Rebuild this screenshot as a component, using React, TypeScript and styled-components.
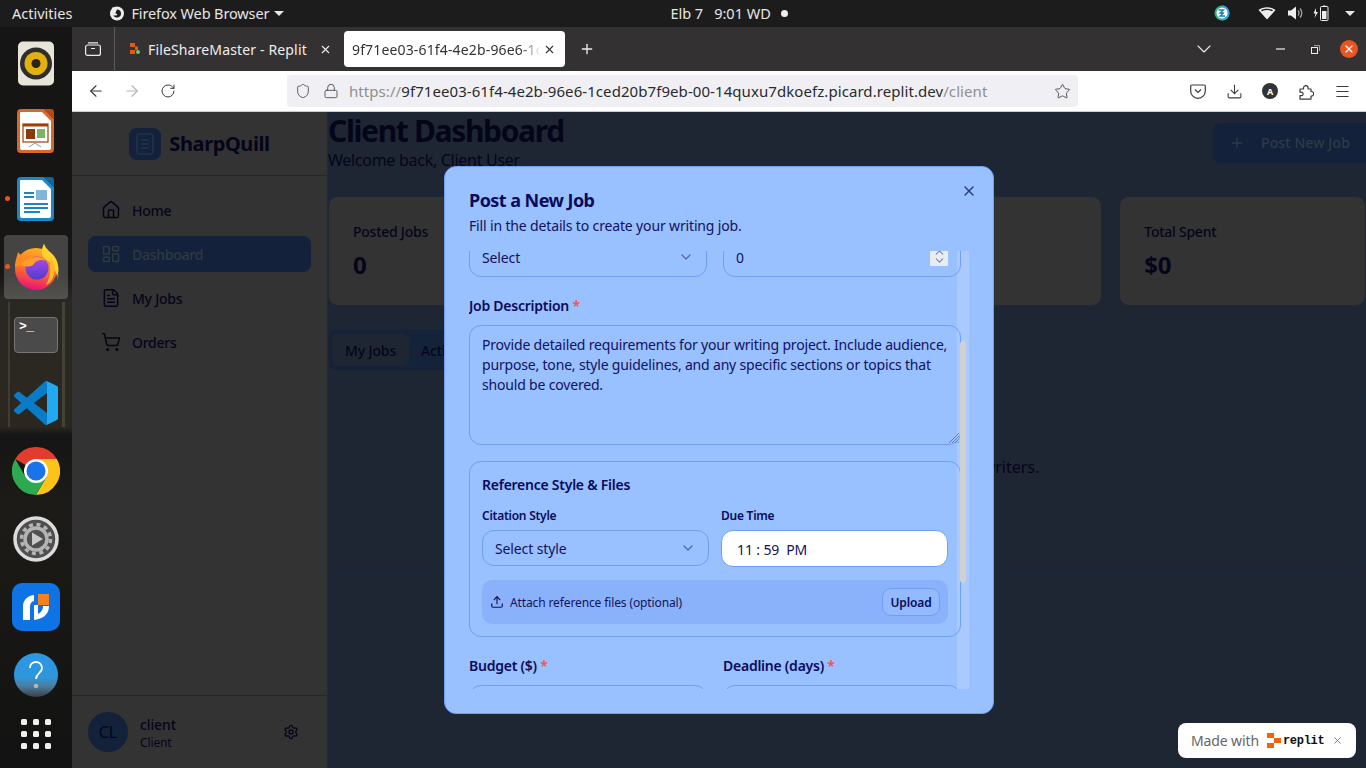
import React from 'react'
import styled, { createGlobalStyle } from 'styled-components'
import {
  ArrowLeft,
  ArrowRight,
  ChevronDown,
  ChevronUp,
  Download,
  FileText,
  Home,
  LayoutDashboard,
  Lock,
  Menu,
  Plus,
  RotateCw,
  Settings,
  Shield,
  ShoppingCart,
  Star,
  Upload,
  X,
} from 'lucide-react'

const FONT = '"Noto Sans", "Open Sans", sans-serif'
const NAVY = '#0b0b5a'
const EDGE = '#6d9ff8'
const INK = '#05051a'
const DEEP = '#13213a'

const GlobalStyle = createGlobalStyle`
  html, body { margin: 0; padding: 0; background: #1f2633; }
  * { box-sizing: border-box; }
  body { font-family: ${FONT}; overflow: hidden; }
`

/* ---------- desktop shell ---------- */
const Desktop = styled.div`
  width: 1366px;
  height: 768px;
  display: flex;
  flex-direction: column;
  overflow: hidden;
  letter-spacing: -0.12px;
`

const TopBar = styled.header`
  height: 27px;
  flex: none;
  background: #1c1c1c;
  color: #e6e6e6;
  font-size: 14.5px;
  letter-spacing: 0;
  display: flex;
  align-items: center;
  padding: 0 0 1px 12px;
`

const BarText = styled.span<{ $left?: number; $tight?: boolean }>`
  margin-left: ${(p) => p.$left ?? 0}px;
  white-space: nowrap;
  letter-spacing: ${(p) => (p.$tight ? -0.12 : 0)}px;
`

const FoxMark = styled.svg`
  margin-left: 37px;
`

const Caret = styled.i<{ $left: number }>`
  margin-left: ${(p) => p.$left}px;
  width: 0;
  height: 0;
  border-left: 5px solid transparent;
  border-right: 5px solid transparent;
  border-top: 5px solid #e6e6e6;
`

const ClockDot = styled.i`
  width: 7px;
  height: 7px;
  border-radius: 50%;
  background: #eee;
  margin-left: 10px;
`

const Tray = styled.div<{ $left: number }>`
  margin-left: ${(p) => p.$left}px;
  display: flex;
  align-items: center;
`

const Body = styled.div`
  flex: 1;
  display: flex;
  min-height: 0;
`

const Dock = styled.nav`
  width: 72px;
  flex: none;
  padding-top: 2px;
  display: flex;
  flex-direction: column;
  background:
    linear-gradient(90deg, transparent 0 8px, rgba(180, 170, 140, 0.16) 8px 10px, transparent 10px 62px, rgba(180, 170, 140, 0.2) 62px 65px, transparent 65px) 0 275px / 72px 125px no-repeat,
    linear-gradient(180deg, #151515 0, #171614 248px, #2a2823 272px, #2b2720 400px, #151515 408px, #1c1b17 480px, #121212 741px);
`

const DockSlot = styled.div<{ $active?: boolean; $height?: number }>`
  position: relative;
  height: ${(p) => p.$height ?? 68}px;
  display: flex;
  align-items: center;
  justify-content: center;

  ${(p) =>
    p.$active &&
    `
    &::before {
      content: '';
      position: absolute;
      left: 4px;
      right: 4px;
      top: 2px;
      bottom: 2px;
      border-radius: 4px;
      background: rgba(255, 255, 255, 0.2);
    }
  `}

  svg { position: relative; }
`

const RunDot = styled.i`
  position: absolute;
  left: 5px;
  top: 50%;
  margin-top: -3px;
  width: 5px;
  height: 5px;
  border-radius: 50%;
  background: #e95420;
`

const TerminalIcon = styled.div`
  width: 44px;
  height: 36px;
  border-radius: 4px;
  border: 1px solid #777;
  background: #4a4a4a;
  color: #fff;
  font: 700 13px/13px 'Liberation Mono', monospace;
  letter-spacing: -0.5px;
  padding: 2px 4px;
`

const Browser = styled.div`
  flex: 1;
  min-width: 0;
  display: flex;
  flex-direction: column;
`

const TabStrip = styled.div`
  height: 44px;
  flex: none;
  background: #333131;
  display: flex;
  align-items: center;
  color: #eee;
  font-size: 14px;
  letter-spacing: 0.15px;
`

const TabManager = styled.div`
  width: 43px;
  height: 44px;
  flex: none;
  border-right: 1px solid #5a5a5a;
  display: flex;
  align-items: center;
  justify-content: center;
`

const Tab = styled.div<{ $active?: boolean }>`
  width: 221px;
  height: 36px;
  border-radius: 4px;
  display: flex;
  align-items: center;
  flex: none;
  ${(p) =>
    p.$active
      ? `padding: 0 9px 0 8px; background: #fff; color: #333; margin-left: 8px;`
      : `padding: 0 4px 0 15px; color: #eee;`}
`

const TabTitle = styled.span<{ $fade?: boolean }>`
  flex: 1;
  min-width: 0;
  overflow: hidden;
  white-space: nowrap;
  ${(p) => p.$fade && 'mask-image: linear-gradient(90deg, #000 88%, transparent 99%);'}
`

const Favicon = styled.svg`
  margin-right: 8px;
  flex: none;
`

const StripIcons = styled.div`
  margin-left: auto;
  display: flex;
  align-items: center;
`

const StripSlot = styled.div<{ $width: number }>`
  width: ${(p) => p.$width}px;
  display: flex;
  align-items: center;
  justify-content: center;
`

const CloseDot = styled.div`
  width: 18px;
  height: 18px;
  border-radius: 50%;
  background: #e95420;
  display: flex;
  align-items: center;
  justify-content: center;
`

const NavBar = styled.div`
  height: 41px;
  flex: none;
  background: #fff;
  border-bottom: 1px solid #ccc;
  display: flex;
  align-items: center;
  padding-left: 6px;
  color: #3a3a3a;
`

const NavButton = styled.div<{ $width?: number; $muted?: boolean }>`
  width: ${(p) => p.$width ?? 36}px;
  flex: none;
  display: flex;
  align-items: center;
  justify-content: center;
  color: ${(p) => (p.$muted ? '#b5b5b5' : '#3a3a3a')};
`

const UrlBar = styled.div`
  width: 791px;
  height: 32px;
  margin: 0 102px 0 101px;
  flex: none;
  background: #f0f0f4;
  border-radius: 4px;
  display: flex;
  align-items: center;
  padding: 0 7px 0 8px;
  font-size: 15px;
`

const LockIcon = styled(Lock)`
  margin-left: 12px;
`

const UrlText = styled.div`
  margin-left: 10px;
  flex: 1;
  white-space: nowrap;
  letter-spacing: 0.07px;
  color: #2b2b2b;
  span { color: #8f8f8f; }
`

const AccountDot = styled.div`
  width: 16px;
  height: 16px;
  border-radius: 50%;
  background: #333;
  color: #fff;
  font-size: 9px;
  font-weight: 700;
  display: flex;
  align-items: center;
  justify-content: center;
`

/* ---------- the app behind the dialog ---------- */
const AppFrame = styled.div`
  position: relative;
  flex: 1;
  min-height: 0;
  display: flex;
  overflow: hidden;
`

const Sidebar = styled.aside`
  width: 256px;
  flex: none;
  background: #333;
  border-right: 1px solid #1f2a3a;
  display: flex;
  flex-direction: column;
  color: ${INK};
`

const Brand = styled.div`
  height: 64px;
  flex: none;
  border-bottom: 1px solid #1c2839;
  display: flex;
  align-items: center;
  justify-content: center;
  gap: 8px;
  font-size: 20px;
  font-weight: 700;
  letter-spacing: -0.4px;
`

const BrandMark = styled.div`
  width: 32px;
  height: 32px;
  border-radius: 8px;
  background: ${DEEP};
  color: #1e2f49;
  display: flex;
  align-items: center;
  justify-content: center;
`

const NavList = styled.ul`
  list-style: none;
  margin: 0;
  padding: 16px 16px 0;
  display: flex;
  flex-direction: column;
  gap: 8px;
  flex: 1;
`

const NavItem = styled.li<{ $active?: boolean }>`
  height: 36px;
  border-radius: 8px;
  padding: 0 13px;
  display: flex;
  align-items: center;
  gap: 11px;
  font-size: 14px;
  font-weight: 500;
  letter-spacing: -0.25px;
  background: ${(p) => (p.$active ? DEEP : 'transparent')};
  color: ${(p) => (p.$active ? '#30393f' : INK)};
`

const UserRow = styled.div`
  height: 73px;
  flex: none;
  border-top: 1px solid #1c2839;
  padding: 0 28px 0 16px;
  display: flex;
  align-items: center;
  gap: 12px;
`

const Avatar = styled.div`
  width: 40px;
  height: 40px;
  border-radius: 50%;
  background: ${DEEP};
  display: flex;
  align-items: center;
  justify-content: center;
  font-size: 16px;
`

const UserText = styled.div`
  flex: 1;
  padding-top: 4px;
  font-size: 14px;
  line-height: 18px;
  font-weight: 500;

  small {
    display: block;
    font-size: 12px;
    font-weight: 400;
  }
`

const Main = styled.main`
  flex: 1;
  min-width: 0;
  background: #1f2633;
  padding-top: 1px;
  color: ${INK};
`

const PageHead = styled.div`
  display: flex;
  align-items: center;
  justify-content: space-between;
  margin-bottom: 24px;
`

const PageTitle = styled.h1`
  margin: 0;
  font-size: 30px;
  line-height: 36px;
  font-weight: 700;
  letter-spacing: -1.35px;
`

const PageSub = styled.p`
  margin: -1px 0 0;
  font-size: 16px;
  line-height: 24px;
  letter-spacing: -0.28px;
`

const PostButton = styled.div`
  width: 153px;
  height: 40px;
  border-radius: 8px 0 0 8px;
  background: ${DEEP};
  color: #2f3a45;
  font-size: 14px;
  font-weight: 500;
  letter-spacing: 0.1px;
  display: flex;
  align-items: center;
  padding-left: 16px;
  gap: 16px;
`

const Stats = styled.section`
  display: grid;
  grid-template-columns: repeat(4, 1fr);
  gap: 17px;
`

const StatCard = styled.div`
  height: 110px;
  background: #333;
  border: 1px solid #1c2839;
  border-radius: 10px;
  padding: 25px 24px;

  p {
    margin: 0;
    font-size: 14px;
    line-height: 20px;
    font-weight: 500;
    letter-spacing: -0.25px;
  }

  strong {
    display: block;
    margin-top: 7px;
    font-size: 24px;
    line-height: 32px;
  }
`

const TabList = styled.div`
  margin: 24px 0 0 1px;
  width: 420px;
  height: 40px;
  border-radius: 8px;
  background: #14233a;
  padding: 4px 3px;
  display: flex;
  font-size: 14px;
  font-weight: 500;
`

const TabButton = styled.div<{ $active?: boolean }>`
  border-radius: 6px;
  display: flex;
  align-items: center;
  justify-content: center;
  ${(p) => p.$active && 'width: 77px; margin-right: 12px; background: #1f2633;'}
`

const EmptyPanel = styled.section`
  margin-top: 16px;
  height: 189px;
  padding-bottom: 28px;
  border: 1px solid #1a2739;
  border-radius: 10px;
  display: flex;
  align-items: center;
  justify-content: center;
  font-size: 16px;
  letter-spacing: 0;
`

/* ---------- dialog ---------- */
const Dialog = styled.div`
  position: absolute;
  left: 372px;
  top: 54px;
  width: 550px;
  height: 548px;
  background: #99c0ff;
  border: 1px solid ${EDGE};
  border-radius: 12px;
  padding: 23px 24px 24px;
  color: ${NAVY};
  display: flex;
  flex-direction: column;
`

const DialogClose = styled.div`
  position: absolute;
  right: 16px;
  top: 16px;
  color: #2c3a78;
  display: flex;
`

const DialogTitle = styled.h2`
  margin: 0;
  font-size: 18px;
  line-height: 20px;
  font-weight: 700;
  letter-spacing: -0.55px;
`

const DialogSub = styled.p`
  margin: 6px 0 0;
  font-size: 14px;
  line-height: 20px;
  letter-spacing: -0.15px;
  color: #12125c;
`

const FormClip = styled.div`
  position: relative;
  margin-top: 15px;
  height: 438px;
  overflow: hidden;
  width: 500px;
`

const Form = styled.form`
  position: relative;
  z-index: 1;
  margin-top: -14px;
  width: 492px;
  display: flex;
  flex-direction: column;
`

const Track = styled.div`
  position: absolute;
  right: 0;
  top: 0;
  bottom: 0;
  width: 12px;
  background: #a9c9ff;
`

const Thumb = styled.div`
  position: absolute;
  z-index: 2;
  right: 3px;
  top: 90px;
  width: 6px;
  height: 242px;
  border-radius: 3px;
  background: #d0d0d0;
`

const Row = styled.div<{ $gap?: number }>`
  position: relative;
  display: grid;
  grid-template-columns: 1fr 1fr;
  gap: ${(p) => p.$gap ?? 16}px;
`

const Field = styled.div`
  display: flex;
  flex-direction: column;
`

const Label = styled.label<{ $small?: boolean }>`
  display: block;
  font-size: ${(p) => (p.$small ? 12 : 14)}px;
  line-height: ${(p) => (p.$small ? 16 : 20)}px;
  font-weight: 600;
  letter-spacing: -0.25px;
  margin-bottom: ${(p) => (p.$small ? 6 : 9)}px;

  b {
    color: #ef5350;
    font-weight: 600;
  }
`

const Select = styled.div<{ $height?: number }>`
  height: ${(p) => p.$height ?? 40}px;
  border: 1px solid ${EDGE};
  border-radius: 12px;
  padding: 0 12px;
  display: flex;
  align-items: center;
  justify-content: space-between;
  font-size: 14px;
  color: #12125c;

  svg { color: #5a6c9e; }
`

const NumberInput = styled.input`
  height: 40px;
  width: 100%;
  border: 1px solid ${EDGE};
  border-radius: 12px;
  padding: 0 12px;
  background: transparent;
  font: 14px ${FONT};
  color: #12125c;
  outline: none;
`

const Spinner = styled.div`
  position: absolute;
  right: 13px;
  top: 11px;
  width: 18px;
  height: 18px;
  background: #e8ecf4;
  color: #85858f;
  display: flex;
  flex-direction: column;
  align-items: center;
  svg { margin-top: -2px; margin-bottom: -3px; }
`

const SpinWrap = styled.div`
  position: relative;
`

const AreaWrap = styled.div`
  position: relative;
`

const TextArea = styled.textarea`
  display: block;
  width: 100%;
  height: 120px;
  border: 1px solid ${EDGE};
  border-radius: 12px;
  background: transparent;
  padding: 9px 12px;
  font: 14px/20px ${FONT};
  letter-spacing: -0.18px;
  color: #12125c;
  outline: none;
  resize: none;
`

const Grip = styled.svg`
  position: absolute;
  right: 2px;
  bottom: 2px;
`

const RefPanel = styled.fieldset`
  margin: 16px 0 0;
  height: 176px;
  min-width: 0;
  border: 1px solid ${EDGE};
  border-radius: 12px;
  padding: 13px 12px 0;
`

const RefHeading = styled.h3`
  margin: 0 0 13px;
  font-size: 14px;
  line-height: 20px;
  font-weight: 600;
  letter-spacing: -0.25px;
`

const TimeBox = styled.div`
  height: 37px;
  background: #fff;
  border: 1px solid ${EDGE};
  border-radius: 12px;
  padding: 2px 15px 0;
  display: flex;
  align-items: center;
  font-size: 14px;
  color: #12125c;
  white-space: pre;
`

const AttachBar = styled.div`
  margin-top: 13px;
  height: 44px;
  border-radius: 10px;
  background: #8ab2fa;
  padding: 0 8px;
  display: flex;
  align-items: center;
  gap: 6px;
  font-size: 12px;
  color: #12125c;

  span { flex: 1; }
`

const UploadButton = styled.div`
  width: 58px;
  height: 28px;
  border: 1px solid ${EDGE};
  border-radius: 9px;
  background: #93baff;
  display: flex;
  align-items: center;
  justify-content: center;
  font-weight: 600;
  font-size: 12px;
  color: ${NAVY};
`

const BudgetRow = styled(Row)`
  margin-top: 19px;
`

const FauxInput = styled.div`
  height: 40px;
  border: 1px solid ${EDGE};
  border-radius: 12px;
`

const DescRow = styled.div`
  margin-top: 19px;
`

/* ---------- made-with badge ---------- */
const MadeWith = styled.div`
  position: absolute;
  right: 10px;
  bottom: 10px;
  width: 178px;
  height: 35px;
  border-radius: 8px;
  background: #fff;
  display: flex;
  align-items: center;
  padding: 0 13px;
  font-size: 14px;
  color: #666;
`

const MadeLogo = styled.svg`
  margin-left: 8px;
  margin-right: 2px;
`

const MadeName = styled.span`
  font: 700 12px 'Liberation Mono', monospace;
  letter-spacing: -0.3px;
  color: #111;
`

const MadeClose = styled.span`
  margin-left: auto;
  color: #777;
  display: flex;
`

/* ---------- drawn icons ---------- */
const Rhythmbox = () => (
  <svg width="44" height="45" viewBox="0 0 44 45">
    <rect width="36" height="44" x="4" y="0.5" rx="5" fill="#e8e4d8" />
    <circle cx="22" cy="22.5" r="16" fill="#2e2e2e" />
    <circle cx="22" cy="22.5" r="11.5" fill="#e2b00f" />
    <circle cx="22" cy="22.5" r="4.5" fill="#2a2518" />
  </svg>
)

const DocIcon = ({ edge, fold, children }: { edge: string; fold: string; children: React.ReactNode }) => (
  <svg width="38" height="46" viewBox="0 0 38 46">
    <path d="M4 1h23l10 10v30a4 4 0 0 1-4 4H4a4 4 0 0 1-4-4V5a4 4 0 0 1 4-4z" fill={edge} />
    <path d="M4 4h21l9 9v27a2 2 0 0 1-2 2H5a2 2 0 0 1-2-2V5a1 1 0 0 1 1-1z" fill="#fff" />
    <path d="M27 1h7a3 3 0 0 1 3 3v7z" fill={fold} />
    {children}
  </svg>
)

const FirefoxIcon = () => (
  <svg width="46" height="46" viewBox="0 0 46 46">
    <defs>
      <linearGradient id="ffBody" x1="0.6" y1="0" x2="0.4" y2="1">
        <stop offset="0" stopColor="#ffb21f" />
        <stop offset="0.55" stopColor="#ff6a2b" />
        <stop offset="1" stopColor="#e5127c" />
      </linearGradient>
      <linearGradient id="ffBall" x1="0.5" y1="0" x2="0.5" y2="1">
        <stop offset="0" stopColor="#b14be6" />
        <stop offset="1" stopColor="#4f3ccf" />
      </linearGradient>
    </defs>
    <circle cx="23" cy="25" r="21" fill="url(#ffBody)" />
    <path d="M31 0c-2 5 1 9 6 12 5 4 8 9 8 15 1 4 0 7-1 9 3-9 1-18-5-25-3-3-7-6-8-11z" fill="#ffdd3a" />
    <path d="M31 0c3 7 9 9 12 15 3 6 3 12 1 18-1-8-6-15-13-19-3-3-3-9 0-14z" fill="#ffd030" />
    <path d="M5 8c-1 5-3 9-3 15l8-3c2-3 2-7 0-9-2 0-4-1-5-3z" fill="#ff8a1f" />
    <circle cx="24" cy="24" r="11.500" fill="url(#ffBall)" />
    <path d="M7 21c4-4 9-8 17-8 4 0 7 1.500 9 4-3-1.500-6-1.500-9 0-2 1-3 3-4 4-3 2-8 2-13 0z" fill="#ff9d2b" />
    <path d="M37 13c4 5 6 11 4 17-1 5-4 9-8 11 3-6 5-12 4-18z" fill="#ffb928" />
  </svg>
)

const VsCode = () => (
  <svg width="44" height="44" viewBox="0 0 100 100">
    <path
      d="M96.5 10.8 75.9.9a6.2 6.2 0 0 0-7.1 1.2L29.3 38.2 12.1 25.1a4.2 4.2 0 0 0-5.3.2L1.4 30.3a4.2 4.2 0 0 0 0 6.2L16.3 50 1.4 63.5a4.2 4.2 0 0 0 0 6.2l5.4 4.9a4.2 4.2 0 0 0 5.3.2l17.2-13.1 39.5 36.1a6.2 6.2 0 0 0 7.1 1.2l20.6-9.9a6.2 6.2 0 0 0 3.5-5.6V16.4a6.2 6.2 0 0 0-3.5-5.6ZM75 72.7 45 50l30-22.7Z"
      fill="#0a7cc7"
    />
    <path d="M72 1.2c1.3-.7 2.7-.8 3.9-.3l20.6 9.9a6.2 6.2 0 0 1 3.5 5.6v66.8a6.2 6.2 0 0 1-3.5 5.6L75.9 99c-1.2.5-2.6.4-3.9-.3 2 .9 3 0 3-2V3.4c0-2-1-3-3-2.2Z" fill="#23a8f2" />
  </svg>
)

const ChromeIcon = () => (
  <svg width="48" height="48" viewBox="0 0 48 48">
    <path d="M3.2 12A24 24 0 0 1 44.8 12H24l-10.4 6z" fill="#e33b2e" />
    <path d="M44.8 12A24 24 0 0 1 24 48L34.4 30V18L24 12z" fill="#fcc419" />
    <path d="M24 48A24 24 0 0 1 3.2 12L13.6 30 34.4 30z" fill="#2da94f" />
    <circle cx="24" cy="24" r="12" fill="#fff" />
    <circle cx="24" cy="24" r="9.5" fill="#1a73e8" />
  </svg>
)

const SettingsIcon = () => (
  <svg width="46" height="46" viewBox="0 0 46 46">
    <circle cx="23" cy="23" r="21" fill="#4f4f4f" stroke="#dcdcdc" strokeWidth="3.5" />
    <circle cx="23" cy="23" r="11" fill="none" stroke="#b4b4b4" strokeWidth="3.5" />
    <circle cx="23" cy="23" r="14.5" fill="none" stroke="#b4b4b4" strokeWidth="3.5" strokeDasharray="4 3.6" />
    <path d="M19 16.500 30 23l-11 6.500z" fill="#c8c8c8" />
  </svg>
)

const ClientIcon = () => (
  <svg width="48" height="48" viewBox="0 0 48 48">
    <rect width="48" height="48" rx="10" fill="#0e74e6" />
    <path d="M11 37V24c0-7 4-11 11-12v6c-3 .5-4 3-4 6v13z" fill="#fff" />
    <path d="M22 37c7-1 15-4 15-14h-6c0 5-3 7-5 8v-9h-4z" fill="#fff" />
    <rect x="26" y="11" width="11" height="11" fill="#f58220" />
  </svg>
)

const HelpIcon = () => (
  <svg width="44" height="44" viewBox="0 0 44 44">
    <defs>
      <linearGradient id="helpFill" x1="0" y1="0" x2="0" y2="1">
        <stop offset="0" stopColor="#2c97e4" />
        <stop offset="0.55" stopColor="#2f96dc" />
        <stop offset="0.75" stopColor="#4b7da0" />
        <stop offset="1" stopColor="#3a3f48" />
      </linearGradient>
    </defs>
    <circle cx="22" cy="22" r="22" fill="url(#helpFill)" />
    <path d="M16 15c0-4 3-6 6-6s6 2.500 6 6c0 5-6 5.500-6 11" fill="none" stroke="#fff" strokeWidth="1.800" />
    <circle cx="22" cy="33" r="2.300" fill="#b5b5b5" />
  </svg>
)

const AppGrid = () => (
  <svg width="32" height="32" viewBox="0 0 32 32" fill="#f0f0f0">
    {[0, 12, 24].map((y) =>
      [0, 12, 24].map((x) => <rect key={`${x}-${y}`} x={x + 1} y={y + 1} width="6" height="6" rx="1.500" />),
    )}
  </svg>
)

const dockDoc = {
  impress: (
    <g>
      <rect x="6" y="16" width="25" height="18" fill="#fff" stroke="#a33e03" strokeWidth="1.200" />
      <rect x="6" y="16" width="25" height="2.500" fill="#a33e03" />
      <rect x="9" y="21" width="9" height="10" fill="#8c3a0d" />
      <rect x="20" y="21" width="8" height="9" fill="#7bb662" />
      <path d="M12 39l6-4 6 4" fill="none" stroke="#999" />
    </g>
  ),
  writer: (
    <g fill="#1a85c7">
      <rect x="7" y="16" width="10" height="2" />
      <rect x="7" y="20" width="10" height="2" />
      <rect x="19" y="14" width="11" height="10" fill="#7fb6da" />
      <rect x="7" y="27" width="24" height="2" />
      <rect x="7" y="31" width="24" height="2" />
      <rect x="7" y="35" width="16" height="2" />
    </g>
  ),
}

const dockItems: { node: React.ReactNode; dot?: boolean; active?: boolean }[] = [
  { node: <Rhythmbox /> },
  { node: <DocIcon edge="#d9662a" fold="#b34a12">{dockDoc.impress}</DocIcon> },
  { node: <DocIcon edge="#1b87c9" fold="#11659a">{dockDoc.writer}</DocIcon>, dot: true },
  { node: <FirefoxIcon />, dot: true, active: true },
  { node: <TerminalIcon>{'>_'}</TerminalIcon> },
  { node: <VsCode /> },
  { node: <ChromeIcon /> },
  { node: <SettingsIcon /> },
  { node: <ClientIcon /> },
  { node: <HelpIcon /> },
]

const navItems = [
  { label: 'Home', icon: Home },
  { label: 'Dashboard', icon: LayoutDashboard, active: true },
  { label: 'My Jobs', icon: FileText },
  { label: 'Orders', icon: ShoppingCart },
]

const stats = [
  { label: 'Posted Jobs', value: '0' },
  { label: 'Active Jobs', value: '0' },
  { label: 'Completed', value: '0' },
  { label: 'Total Spent', value: '$0' },
]

const description =
  'Provide detailed requirements for your writing project. Include audience, purpose, tone, style guidelines, and any specific sections or topics that should be covered.'

const App = () => {
  return (
    <Desktop>
      <GlobalStyle />
      <TopBar>
        <BarText>Activities</BarText>
        <FoxMark width="16" height="16" viewBox="0 0 16 16">
          <circle cx="8" cy="8.500" r="7" fill="#eee" />
          <path d="M8 4.500a4 4 0 1 1-3.800 5.200c1 1 3 1.300 3.800.3.700-.9-.4-1.700-1.500-1.500 0-1.500 1-2.500 1.500-4z" fill="#1c1c1c" />
          <path d="M4 1.500c.5 1.500 2 2 3.500 2L6 6 3 4z" fill="#eee" />
        </FoxMark>
        <BarText $left={6} $tight>Firefox Web Browser</BarText>
        <Caret $left={5} />
        <BarText $left={386}>Elb 7</BarText>
        <BarText $left={11}>9:01 WD</BarText>
        <ClockDot />
        <Tray $left={426}>
          <svg width="16" height="16" viewBox="0 0 16 16">
            <circle cx="8" cy="8" r="7.500" fill="#27b38a" />
            <path d="M8 .5a7.500 7.500 0 0 1 0 15v-2a5.500 5.500 0 0 0 0-11z" fill="#35a4e8" />
            <circle cx="8" cy="8" r="5.500" fill="#fff" />
            <path d="M4.500 5h5L6 8h4M11 11H6l3.500-3" fill="none" stroke="#1d7fb0" strokeWidth="1.300" />
          </svg>
        </Tray>
        <Tray $left={28}>
          <svg width="18" height="14" viewBox="0 0 18 14">
            <path d="M9 13.500 0.500 4C5 .2 13 .2 17.500 4z" fill="#eee" />
            <path d="M3 4.200C6 2.200 12 2.200 15 4.200L14 5.300C11 3.500 7 3.500 4 5.300z" fill="#1c1c1c" />
          </svg>
        </Tray>
        <Tray $left={12}>
          <svg width="16" height="14" viewBox="0 0 16 14">
            <path d="M0 4.500h3L8 .5v13l-5-4H0z" fill="#eee" />
            <path d="M10 4.500a3.500 3.500 0 0 1 0 5M12 2.500a6.500 6.500 0 0 1 0 9" fill="none" stroke="#aaa" strokeWidth="1.200" />
          </svg>
        </Tray>
        <Tray $left={9}>
          <svg width="16" height="16" viewBox="0 0 16 16">
            <path d="M3 3 0.500 8.500H2.500L1.500 13 5 7H3z" fill="#eee" />
            <rect x="7.500" y="1.500" width="7.500" height="14" rx="1" fill="none" stroke="#eee" />
            <rect x="10" y="0.500" width="2.500" height="1" fill="#eee" />
            <rect x="9" y="6" width="4.500" height="8" fill="#eee" />
          </svg>
        </Tray>
        <Caret $left={16} />
      </TopBar>

      <Body>
        <Dock>
          {dockItems.map((item, i) => (
            <DockSlot key={i} $active={item.active}>
              {item.dot && <RunDot />}
              {item.node}
            </DockSlot>
          ))}
          <DockSlot $height={50}>
            <AppGrid />
          </DockSlot>
        </Dock>

        <Browser>
          <TabStrip>
            <TabManager>
              <svg width="16" height="14" viewBox="0 0 16 14" fill="none" stroke="#eee" strokeWidth="1.200">
                <rect x="0.600" y="3" width="14.800" height="10.400" rx="2" />
                <path d="M3 .8h10M6 6.500h4" />
              </svg>
            </TabManager>
            <Tab>
              <Favicon width="10" height="12" viewBox="0 0 10 12">
                <rect x="0" y="0" width="5" height="4" fill="#e8590c" />
                <rect x="0" y="7" width="5" height="4" fill="#e8590c" />
                <rect x="5" y="3.500" width="3" height="3.500" fill="#e8590c" />
                <circle cx="8" cy="9" r="2" fill="#5fd068" />
              </Favicon>
              <TabTitle>FileShareMaster - Replit</TabTitle>
              <X size={13} />
            </Tab>
            <Tab $active>
              <TabTitle $fade>9f71ee03-61f4-4e2b-96e6-1ced20b7f9eb-00-14quxu7dkoefz.picard.replit.dev/client</TabTitle>
              <X size={13} />
            </Tab>
            <StripSlot $width={44}>
              <Plus size={16} />
            </StripSlot>
            <StripIcons>
              <StripSlot $width={120}>
                <ChevronDown size={24} strokeWidth={1.100} />
              </StripSlot>
              <StripSlot $width={34}>
                <svg width="10" height="2" viewBox="0 0 10 2">
                  <rect width="9" height="1.200" y="0.400" fill="#eee" />
                </svg>
              </StripSlot>
              <StripSlot $width={34}>
                <svg width="9" height="9" viewBox="0 0 9 9" fill="none" stroke="#eee">
                  <rect x="0.500" y="2.500" width="6" height="6" />
                  <path d="M3 .5h5.500V6" strokeOpacity="0.600" />
                </svg>
              </StripSlot>
              <StripSlot $width={34}>
                <CloseDot>
                  <X size={12} color="#fff" strokeWidth={2.400} />
                </CloseDot>
              </StripSlot>
            </StripIcons>
          </TabStrip>

          <NavBar>
            <NavButton>
              <ArrowLeft size={18} strokeWidth={1.500} />
            </NavButton>
            <NavButton $muted>
              <ArrowRight size={18} strokeWidth={1.500} />
            </NavButton>
            <NavButton>
              <RotateCw size={16} strokeWidth={1.500} />
            </NavButton>
            <UrlBar>
              <Shield size={16} strokeWidth={1.400} color="#555" />
              <LockIcon size={16} strokeWidth={1.400} color="#555" />
              <UrlText>
                <span>https://</span>9f71ee03-61f4-4e2b-96e6-1ced20b7f9eb-00-14quxu7dkoefz.picard.replit.dev<span>/client</span>
              </UrlText>
              <Star size={17} strokeWidth={1.400} color="#555" />
            </UrlBar>
            <NavButton>
              <svg width="16" height="15" viewBox="0 0 16 15" fill="none" stroke="#3a3a3a" strokeWidth="1.200">
                <path d="M2 1h12a1.300 1.300 0 0 1 1.300 1.300V7A7.300 7.300 0 0 1 .7 7V2.300A1.300 1.300 0 0 1 2 1z" />
                <path d="M5 5.500l3 3 3-3" />
              </svg>
            </NavButton>
            <NavButton>
              <Download size={17} strokeWidth={1.500} />
            </NavButton>
            <NavButton>
              <AccountDot>A</AccountDot>
            </NavButton>
            <NavButton>
              <svg width="16" height="17" viewBox="0 0 16 17" fill="none" stroke="#3a3a3a" strokeWidth="1.200" strokeLinejoin="round">
                <path d="M2 6h3.500v-1a2.300 2.300 0 1 1 4.600 0v1H13v2.500h.4a2.300 2.300 0 1 1 0 4.600H13v3H2v-3.500h1.400a1.700 1.700 0 0 0 0-3.400H2z" />
              </svg>
            </NavButton>
            <NavButton>
              <Menu size={17} strokeWidth={1.500} />
            </NavButton>
          </NavBar>

          <AppFrame>
            <Sidebar>
              <Brand>
                <BrandMark>
                  <svg width="18" height="22" viewBox="0 0 18 22" fill="none" stroke="currentColor" strokeWidth="2">
                    <rect x="1" y="1" width="16" height="20" rx="3" />
                    <path d="M5 7h8M5 11h8M5 15h8" />
                  </svg>
                </BrandMark>
                SharpQuill
              </Brand>
              <NavList>
                {navItems.map((item) => (
                  <NavItem key={item.label} $active={item.active}>
                    <item.icon size={20} strokeWidth={1.800} />
                    {item.label}
                  </NavItem>
                ))}
              </NavList>
              <UserRow>
                <Avatar>CL</Avatar>
                <UserText>
                  client
                  <small>Client</small>
                </UserText>
                <Settings size={16} />
              </UserRow>
            </Sidebar>

            <Main>
              <PageHead>
                <div>
                  <PageTitle>Client Dashboard</PageTitle>
                  <PageSub>Welcome back, Client User</PageSub>
                </div>
                <PostButton>
                  <Plus size={16} />
                  Post New Job
                </PostButton>
              </PageHead>
              <Stats>
                {stats.map((s) => (
                  <StatCard key={s.label}>
                    <p>{s.label}</p>
                    <strong>{s.value}</strong>
                  </StatCard>
                ))}
              </Stats>
              <TabList>
                <TabButton $active>My Jobs</TabButton>
                <TabButton>Active</TabButton>
              </TabList>
              <EmptyPanel>Post your first job to start working with our writers.</EmptyPanel>
            </Main>

            <Dialog>
              <DialogClose>
                <X size={16} />
              </DialogClose>
              <DialogTitle>Post a New Job</DialogTitle>
              <DialogSub>Fill in the details to create your writing job.</DialogSub>
              <FormClip>
                <Track />
                <Thumb />
                <Form>
                  <Row>
                    <Select>
                      Select
                      <ChevronDown size={16} />
                    </Select>
                    <SpinWrap>
                      <NumberInput type="text" value="0" readOnly />
                      <Spinner>
                        <ChevronUp size={13} />
                        <ChevronDown size={13} />
                      </Spinner>
                    </SpinWrap>
                  </Row>
                  <DescRow>
                    <Label>
                      Job Description <b>*</b>
                    </Label>
                  </DescRow>
                  <AreaWrap>
                    <TextArea value={description} readOnly />
                    <Grip width="10" height="10" viewBox="0 0 10 10" stroke="#5b6f96" strokeWidth="0.800">
                      <path d="M0 10 10 0M3 10l7-7M6 10l4-4M8.500 10l1.500-1.500" />
                    </Grip>
                  </AreaWrap>
                  <RefPanel>
                    <RefHeading>Reference Style &amp; Files</RefHeading>
                    <Row $gap={12}>
                      <Field>
                        <Label $small>Citation Style</Label>
                        <Select $height={36}>
                          Select style
                          <ChevronDown size={16} />
                        </Select>
                      </Field>
                      <Field>
                        <Label $small>Due Time</Label>
                        <TimeBox>11 : 59  PM</TimeBox>
                      </Field>
                    </Row>
                    <AttachBar>
                      <Upload size={14} />
                      <span>Attach reference files (optional)</span>
                      <UploadButton>Upload</UploadButton>
                    </AttachBar>
                  </RefPanel>
                  <BudgetRow>
                    <Field>
                      <Label>
                        Budget ($) <b>*</b>
                      </Label>
                      <FauxInput />
                    </Field>
                    <Field>
                      <Label>
                        Deadline (days) <b>*</b>
                      </Label>
                      <FauxInput />
                    </Field>
                  </BudgetRow>
                </Form>
              </FormClip>
            </Dialog>

            <MadeWith>
              Made with
              <MadeLogo width="14" height="15" viewBox="0 0 14 15" fill="#f26207">
                <rect x="0" y="0" width="7" height="5" />
                <rect x="7" y="5" width="7" height="5" />
                <rect x="0" y="10" width="7" height="5" />
              </MadeLogo>
              <MadeName>replit</MadeName>
              <MadeClose>
                <X size={11} />
              </MadeClose>
            </MadeWith>
          </AppFrame>
        </Browser>
      </Body>
    </Desktop>
  )
}

export default App
